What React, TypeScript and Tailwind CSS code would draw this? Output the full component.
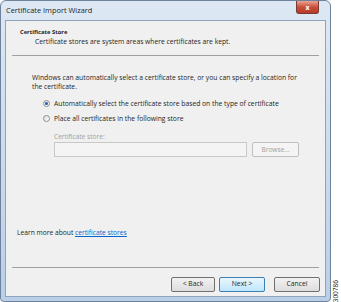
import React from 'react';

// Win7 style wizard dialog, scaled down
const Radio = ({ checked }: { checked?: boolean }) => (
  <span className="flex h-[7px] w-[7px] items-center justify-center rounded-full border border-[#8e8f8f] bg-gradient-to-br from-[#dcdcdc] to-[#ffffff]">
    {checked && <span className="h-[3px] w-[3px] rounded-full bg-[#1f5fa8]" />}
  </span>
);

const Btn = ({ label, primary, w }: { label: string; primary?: boolean; w: string }) => (
  <div
    className={`flex h-[15px] items-center justify-center rounded-[2px] border text-[6.8px] text-[#1e1e1e] ${w} ${
      primary
        ? 'border-[#3c7fb1] bg-gradient-to-b from-[#eaf6fd] to-[#bee6fd]'
        : 'border-[#707070] bg-gradient-to-b from-[#f2f2f2] to-[#dddddd]'
    }`}
  >
    {label}
  </div>
);

export default function App() {
  return (
    <div className="flex h-[302px] w-[341px] bg-white font-['Open_Sans',sans-serif] text-[#1e1e1e]">
      <div className="flex h-[302px] w-[331px] flex-col rounded-t-[6px] rounded-b-[4px] border border-[#6e829b] bg-gradient-to-b from-[#dde8f4] via-[#cbdcee] to-[#b9cfe7] px-[4px] pb-[4px]">
        {/* Title bar */}
        <div className="flex h-[19px] items-start justify-between">
          <span className="mt-[4px] pl-[1px] text-[7.4px] text-[#1e1e1e]">Certificate Import Wizard</span>
          <div className="mr-[7px] flex h-[13px] w-[23px] items-center justify-center rounded-b-[3px] border border-t-0 border-[#7a3a33] bg-gradient-to-b from-[#e8a394] via-[#c9503b] to-[#b83a26]">
            <span className="text-[7px] font-bold leading-none text-white">x</span>
          </div>
        </div>

        {/* Client area */}
        <div className="flex flex-1 flex-col border border-[#8ea3bd] bg-[#f0f0f0]">
          <div className="pl-[14px] pt-[6px] text-[5.8px] font-bold leading-[10px]">Certificate Store</div>
          <div className="pl-[29px] text-[6.75px] leading-[10px]">
            Certificate stores are system areas where certificates are kept.
          </div>
          <div className="mx-[6px] mt-[8px] h-px bg-[#a0a0a0]" />

          <div className="mt-[17px] pl-[26px] pr-[20px] text-[6.75px] leading-[9px]">
            Windows can automatically select a certificate store, or you can specify a location for the certificate.
          </div>

          <div className="mt-[8px] flex flex-col gap-[6px] pl-[37px] text-[6.75px] leading-[9px]">
            <div className="flex items-center gap-[4px]">
              <Radio checked />
              <span>Automatically select the certificate store based on the type of certificate</span>
            </div>
            <div className="flex items-center gap-[4px]">
              <Radio />
              <span>Place all certificates in the following store</span>
            </div>
          </div>

          <div className="mt-[10px] pl-[48px] text-[6.6px] leading-[7px] text-[#a0a0a0]">Certificate store:</div>
          <div className="mt-[2px] flex gap-[5px] pl-[48px]">
            <div className="h-[15px] w-[193px] border border-[#c8c8c8] bg-[#f4f4f4]" />
            <div className="flex h-[15px] w-[47px] items-center justify-center rounded-[2px] border border-[#c0c0c0] bg-[#f4f4f4] text-[6.6px] text-[#a0a0a0]">
              Browse...
            </div>
          </div>

          <div className="flex-1" />

          <div className="pl-[11px] text-[6.7px] leading-[9px]">
            Learn more about <span className="text-[#0066cc] underline">certificate stores</span>
          </div>
          <div className="mx-[6px] mt-[30px] h-px bg-[#a0a0a0]" />
          <div className="mb-[4px] mt-[9px] flex justify-end pr-[5px]">
            <Btn label="< Back" w="w-[44px]" />
            <div className="w-[4px]" />
            <Btn label="Next >" primary w="w-[46px]" />
            <div className="w-[9px]" />
            <Btn label="Cancel" w="w-[46px]" />
          </div>
        </div>
      </div>

      <div className="flex flex-1 items-end justify-center">
        <span className="block whitespace-nowrap text-[6.5px] leading-none [writing-mode:vertical-rl] rotate-180">300786</span>
      </div>
    </div>
  );
}
